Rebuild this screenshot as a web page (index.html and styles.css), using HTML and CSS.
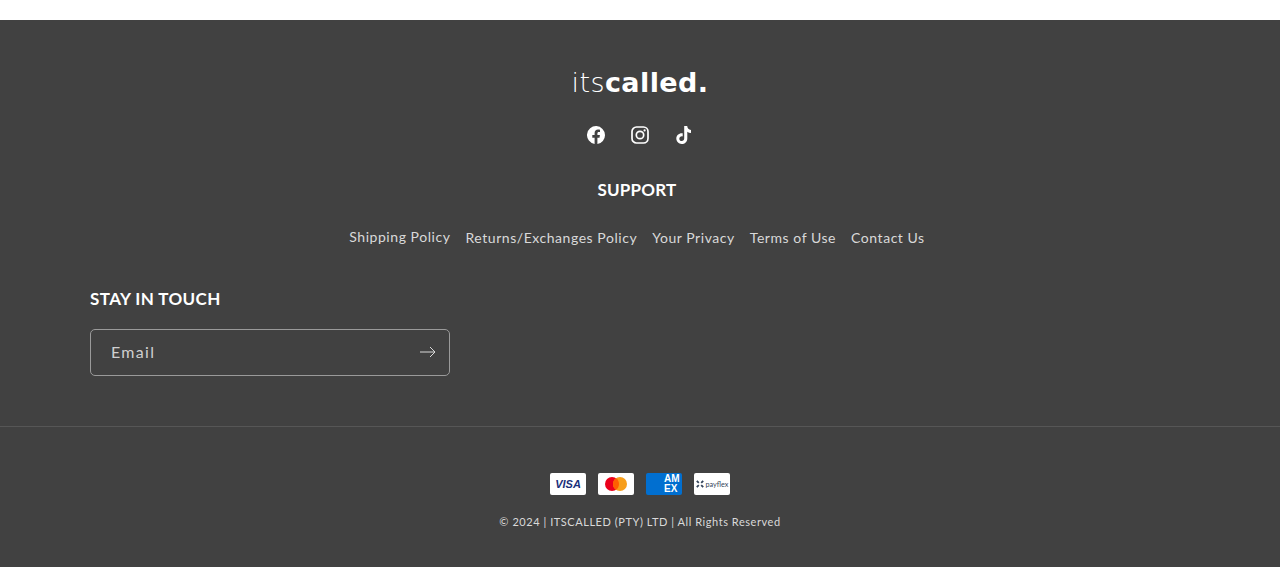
FILE: index.html
```html
<!DOCTYPE html>
<html lang="en">
<head>
    <meta charset="UTF-8">
    <meta name="viewport" content="width=device-width, initial-scale=1.0">
    <title>itscalled.</title>
    <link rel="stylesheet" href="styles.css">
</head>
<body>
    <footer class="footer">
        <div class="footer-top">
            <a class="logo" href="#"><span class="logo-light">its</span><span class="logo-bold">called.</span></a>

            <ul class="social">
                <li>
                    <a href="#" aria-label="Facebook">
                        <svg viewBox="0 0 18 18" width="18" height="18"><path fill="#fff" d="M18 9.05A9 9 0 1 0 7.6 18v-6.3H5.3V9.05h2.3V7.07c0-2.26 1.34-3.5 3.4-3.5.98 0 2 .17 2 .17v2.22h-1.13c-1.12 0-1.47.7-1.47 1.4v1.69h2.5l-.4 2.65h-2.1V18A9 9 0 0 0 18 9.05z"/></svg>
                    </a>
                </li>
                <li>
                    <a href="#" aria-label="Instagram">
                        <svg viewBox="0 0 18 18" width="18" height="18" fill="none" stroke="#fff"><rect x="1" y="1" width="16" height="16" rx="4.5" stroke-width="1.7"/><circle cx="9" cy="9" r="3.7" stroke-width="1.7"/><circle cx="13.6" cy="4.4" r="1.1" fill="#fff" stroke="none"/></svg>
                    </a>
                </li>
                <li>
                    <a href="#" aria-label="TikTok">
                        <svg viewBox="0 0 18 18" width="18" height="18"><path fill="#fff" d="M9.2 0h3c.2 2 1.5 3.7 3.8 4v3c-1.4 0-2.7-.4-3.7-1.2v6.6c0 3.2-2.5 5.6-5.6 5.6-3 0-5.4-2.4-5.4-5.4 0-3.3 2.9-5.8 6.4-5.3v3.1c-1.8-.4-3.4.6-3.4 2.3 0 1.4 1.1 2.4 2.4 2.4 1.5 0 2.5-1.1 2.5-2.8z"/></svg>
                    </a>
                </li>
            </ul>

            <h2 class="footer-title">SUPPORT</h2>

            <ul class="footer-links">
                <li class="shipping"><a href="#">Shipping Policy</a></li>
                <li><a href="#">Returns/Exchanges Policy</a></li>
                <li><a href="#">Your Privacy</a></li>
                <li><a href="#">Terms of Use</a></li>
                <li><a href="#">Contact Us</a></li>
            </ul>
        </div>

        <div class="newsletter">
            <h2 class="newsletter-title">STAY IN TOUCH</h2>
            <form class="email-field">
                <span class="email-label">Email</span>
                <svg class="arrow" viewBox="0 0 16 12" width="16" height="12" fill="none" stroke="#d9d9d9"><path d="M0 6h15M10 1l5 5-5 5"/></svg>
            </form>
        </div>

        <div class="footer-bottom">
            <ul class="payments">
                <li class="card">
                    <span class="visa">VISA</span>
                </li>
                <li class="card">
                    <svg viewBox="0 0 36 22" width="36" height="22"><circle cx="14" cy="11" r="7" fill="#eb001b"/><circle cx="22" cy="11" r="7" fill="#f79e1b"/><path fill="#ff5f00" d="M18 5.25a7 7 0 0 1 0 11.5 7 7 0 0 1 0-11.5z"/></svg>
                </li>
                <li class="card card-amex">
                    <span class="amex">AM<br>EX</span>
                </li>
                <li class="card card-payflex">
                    <svg viewBox="0 0 8 8" width="8" height="8" fill="none" stroke="#33445a" stroke-width="1.8"><path d="M.8.8l2 2M7.2.8l-2 2M.8 7.2l2-2M7.2 7.2l-2-2"/></svg>
                    <span class="payflex">payflex</span>
                </li>
            </ul>
            <p class="copyright">© 2024 | ITSCALLED (PTY) LTD | All Rights Reserved</p>
        </div>
    </footer>
</body>
</html>
```

FILE: styles.css
```css
* {
    margin: 0;
    padding: 0;
    box-sizing: border-box;
}

body {
    font-family: 'Lato', 'Liberation Sans', sans-serif;
    background: white;
    padding-top: 20px;
}

ul {
    list-style: none;
}

a {
    color: inherit;
    text-decoration: none;
}

.footer {
    background: #414141;
    color: #fff;
    height: 547px;
    display: flex;
    flex-direction: column;
}

.footer-top {
    display: flex;
    flex-direction: column;
    align-items: center;
    padding-top: 47px;
}

.logo {
    display: flex;
    align-items: baseline;
    height: 31px;
    font-family: 'DejaVu Sans', sans-serif;
    font-size: 27px;
    line-height: 32px;
    letter-spacing: 0.4px;
}

.logo-light {
    font-weight: 200;
}

.logo-bold {
    font-weight: 700;
}

.social {
    display: flex;
    margin-top: 15px;
}

.social a {
    display: flex;
    align-items: center;
    justify-content: center;
    width: 44px;
    height: 44px;
}

.footer-title {
    font-size: 17px;
    font-weight: 700;
    line-height: 24px;
    letter-spacing: 0.2px;
    margin-top: 21px;
    margin-left: -6px;
}

.footer-links {
    display: flex;
    gap: 15px;
    margin-top: 24px;
    margin-left: -6px;
    font-size: 14px;
    line-height: 24px;
    letter-spacing: 0.55px;
    color: #d9d9d9;
}

.shipping {
    margin-top: -1px;
}

.newsletter {
    padding: 0 90px;
    margin-top: 37px;
}

.newsletter-title {
    font-size: 17px;
    font-weight: 700;
    line-height: 24px;
    letter-spacing: 0.4px;
}

.email-field {
    display: flex;
    align-items: center;
    justify-content: space-between;
    width: 360px;
    height: 47px;
    margin-top: 18px;
    padding: 0 13px 2px 20px;
    border: 1px solid #9a9a9a;
    border-radius: 5px;
}

.email-label {
    font-size: 16px;
    letter-spacing: 1.3px;
    color: #d0d0d0;
}

.footer-bottom {
    display: flex;
    flex-direction: column;
    align-items: center;
    margin-top: 50px;
    padding-top: 46px;
    border-top: 1px solid #565656;
}

.payments {
    display: flex;
    gap: 12px;
}

.card {
    display: flex;
    align-items: center;
    justify-content: center;
    width: 36px;
    height: 22px;
    background: #fff;
    border-radius: 2px;
    overflow: hidden;
}

.visa {
    font-family: 'Liberation Sans', sans-serif;
    font-size: 11px;
    font-weight: 700;
    font-style: italic;
    color: #1a2f7a;
}

.card-amex {
    background: #016fd0;
    justify-content: flex-start;
    padding-left: 18px;
}

.amex {
    color: #fff;
    font-family: 'Liberation Sans', sans-serif;
    font-size: 10px;
    font-weight: 700;
    line-height: 10px;
    white-space: nowrap;
}

.card-payflex {
    gap: 2px;
}

.payflex {
    font-size: 7.2px;
    color: #33445a;
}

.copyright {
    margin-top: 19px;
    font-size: 11px;
    line-height: 16px;
    letter-spacing: 0.55px;
    color: #d9d9d9;
}
```
